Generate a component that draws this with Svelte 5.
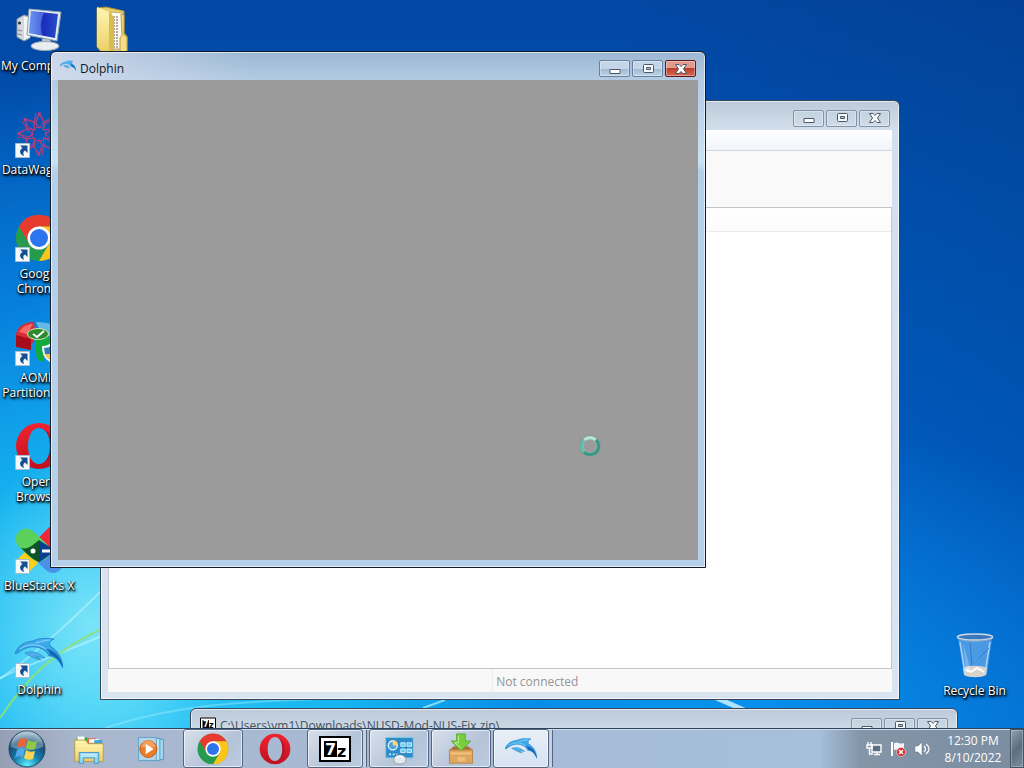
<script>
  const shortcuts = [
    { icon: 'computer', lines: ['My Computer'], link: false },
    { icon: 'data', lines: ['DataWagon...'], link: true },
    { icon: 'chrome', lines: ['Google', 'Chrome'], link: true },
    { icon: 'disks', lines: ['AOMEI', 'Partition As...'], link: true },
    { icon: 'opera', lines: ['Opera', 'Browser'], link: true },
    { icon: 'blocks', lines: ['BlueStacks X'], link: true },
    { icon: 'dolphin', lines: ['Dolphin'], link: true }
  ];

  const tasks = [
    { icon: 'explorer', name: 'Explorer', state: '' },
    { icon: 'media', name: 'Media Player', state: '' },
    { icon: 'chrome', name: 'Chrome', state: 'open' },
    { icon: 'opera', name: 'Opera', state: '' },
    { icon: 'seven', name: '7-Zip', state: 'open stacked' },
    { icon: 'panel', name: 'Control Panel', state: 'open' },
    { icon: 'package', name: 'Installer', state: 'open' },
    { icon: 'dolphin', name: 'Dolphin', state: 'open stacked active' }
  ];

  const petals = [0, 45, 90, 135, 180, 225, 270, 315];
</script>

{#snippet glyph(name)}
  {#if name === 'computer'}
    <svg class="glyph" viewBox="0 0 48 48" aria-hidden="true">
      <path d="M2 13l7-4 6 2v21l-6 3-7-4z" fill="#d5d9dc" stroke="#8b949c" />
      <path d="M9 11v23l6-3V11z" fill="#f3f4f4" />
      <circle cx="4.500" cy="17" r="1.500" fill="#283038" />
      <path d="M3 24l4 1M3 28l4 1" stroke="#7c858c" />
      <path d="M27 33l8-1 1 7h-9z" fill="#b9c4cc" />
      <ellipse cx="30" cy="40" rx="14" ry="4.500" fill="#e9eef0" stroke="#9aa7b2" />
      <path d="M14 3l32 3-4 29-30-6z" fill="#e4ebf1" stroke="#8ca0b4" />
      <path d="M16 5l27 3-3 24-26-5z" fill="url(#screen)" />
      <path d="M16 5l13 2c-4 8-4 15-2 22l-13-2z" fill="#8fb3ff" opacity=".4" />
    </svg>
  {:else if name === 'folder'}
    <svg class="glyph" viewBox="0 0 48 48" aria-hidden="true">
      <path d="M8 2l9-1 18 4v22l3 3v17H13L8 41z" fill="#e6cf69" stroke="#a28d39" />
      <path d="M22 6l12 1v36H22z" fill="#fffbed" stroke="#c4b26b" />
      <path d="M25 10v34M28 10v34" stroke="#b8a7a2" stroke-width="2" stroke-dasharray="2 1" />
      <path d="M8 1l12 5v40L8 41z" fill="url(#folder)" />
      <path d="M20 6l5 5v37l-5-2z" fill="#d7bd4b" />
      <path d="M32 8l3 1v20l3 2v16h-7V32l2-3z" fill="#f5dc86" stroke="#b59c42" />
    </svg>
  {:else if name === 'data'}
    <svg class="glyph" viewBox="0 0 48 48" aria-hidden="true">
      <g fill="none" stroke="#c23a78" stroke-width=".900">
        {#each petals as turn}
          <g transform="rotate({turn} 24 24)">
            <path d="M24 18L19 12l5-8 5 8zM19 12L9 8l5 10 6 2M29 12l8-5" />
            <circle cx="24" cy="4" r="1" fill="#e64668" />
            <circle cx="19" cy="12" r="1" fill="#7b49a8" />
          </g>
        {/each}
        <circle cx="24" cy="24" r="7" />
      </g>
    </svg>
  {:else if name === 'chrome'}
    <svg class="glyph" viewBox="0 0 48 48" aria-hidden="true">
      <circle cx="24" cy="24" r="23" fill="#269b4d" />
      <path d="M4 12.500A23 23 0 0 1 44 12.500H24l-10 17z" fill="#e83b30" />
      <path d="M44 12.500A23 23 0 0 1 24 47l10-17-10-17.500z" fill="#fdc51b" />
      <path d="M4 12.500L14 30l10 6-6 10.200A23 23 0 0 1 4 12.500z" fill="#269b4d" />
      <circle cx="24" cy="24" r="11.500" fill="#fff" />
      <circle cx="24" cy="24" r="9" fill="#2d75ee" />
    </svg>
  {:else if name === 'disks'}
    <svg class="glyph" viewBox="0 0 48 48" aria-hidden="true">
      <path d="M1 17C2 8 10 4 19 4l2 14-4 8-16-4z" fill="#d92d36" />
      <path d="M1 17l15 4v11L1 29z" fill="#a50e1a" />
      <path d="M4 14c4-6 9-8 14-8l-6 10z" fill="#ff817b" opacity=".7" />
      <path d="M21 4c13 0 24 4 25 12L28 20z" fill="#65b9e6" />
      <path d="M46 15v13l-18 4V20z" fill="#288bc4" />
      <path d="M20 22l14-3v8l-6 2v15l-6-3z" fill="#13ab38" />
      <ellipse cx="23" cy="16" rx="10.500" ry="5.500" fill="#2d8a2b" stroke="#c6ecb7" />
      <path d="M18 16l4 3 7-6" fill="none" stroke="#fff" stroke-width="2" />
      <path d="M27 28c5 0 8-2 10-4 3 3 6 4 10 4 0 9-3 14-10 17-7-3-10-8-10-17z" fill="#eef3f5" />
      <path d="M29 30c4 0 6-1 8-3v9h-7z" fill="#2c7ec1" />
      <path d="M30 36h7v7c-4-2-6-4-7-7z" fill="#f6c342" />
    </svg>
  {:else if name === 'opera'}
    <svg class="glyph" viewBox="0 0 48 48" aria-hidden="true">
      <path fill="url(#opera)" fill-rule="evenodd" d="M24 1a23 23 0 1 0 0 46 23 23 0 0 0 0-46zm0 5c7 0 11 8 11 18s-4 18-11 18-11-8-11-18S17 6 24 6z" />
      <path d="M24 6c7 0 11 8 11 18s-4 18-11 18c18-1 20-34 0-36z" fill="#9e0a16" opacity=".6" />
    </svg>
  {:else if name === 'blocks'}
    <svg class="glyph" viewBox="0 0 48 48" aria-hidden="true">
      <path d="M4 44L24 24" stroke="#ffd016" stroke-width="17" stroke-linecap="round" />
      <path d="M24 24l14 13" stroke="#4a91e8" stroke-width="20" stroke-linecap="round" />
      <path d="M24 24L40 8" stroke="#ee2638" stroke-width="18" stroke-linecap="round" />
      <path d="M11 13l13 12" stroke="#5bd05b" stroke-width="21" stroke-linecap="round" />
      <path d="M6 22c7 2 12-3 18-8v22c-6-2-12-8-18-14z" fill="#0d5727" />
      <path d="M24 14c5 3 10 7 16 10-5 4-10 9-16 12z" fill="#093f91" />
      <circle cx="18" cy="25" r="2.500" fill="#fff" />
      <path d="M27 25h8" stroke="#fff" stroke-width="3" />
    </svg>
  {:else if name === 'dolphin'}
    <svg class="glyph" viewBox="0 0 48 48" aria-hidden="true">
      <g transform="translate(0 8)">
        <path d="M0 15C4 7 9 4 18 3c6-3 12-3 21-2-4 2-5 3-4 7 7 4 12 11 13 22-4-8-8-12-14-12-2-5-7-8-13-9-7-1-13 2-17 5-2 2-4 2-4 1z" fill="url(#dolphin)" stroke="#1c7cc9" stroke-width=".800" />
        <path d="M5 11c7-5 17-6 26 0M21 5c7-2 10-3 14-3" fill="none" stroke="#8fd8f8" />
        <path d="M10 15c8-3 14 0 20 5-4-1-6-1-9-1 3 1 4 2 5 3-6-1-11-4-16-7z" fill="#4eaee9" stroke="#2889cb" stroke-width=".700" />
        <path d="M31 11c3 2 4 4 4 6 5 1 9 4 13 13-2-12-9-18-17-19z" fill="#1468b4" />
      </g>
    </svg>
  {:else if name === 'explorer'}
    <svg class="glyph" viewBox="0 0 36 36" aria-hidden="true">
      <path d="M4 5h12v6H4z" fill="#35a93e" /><path d="M5 4h8v4H5z" fill="#fff" />
      <path d="M16 6h10v6H16z" fill="#eb6244" /><path d="M18 7h11v4H18z" fill="#fff" />
      <path d="M24 8h9v6h-9z" fill="#3ba6e0" />
      <path d="M2 8h12l3 4h17v20H2z" fill="url(#folder)" stroke="#b59b42" />
      <path d="M3 15h30M3 19h30" stroke="#fff1ac" />
      <path d="M7 34V22h22v12h-5v-6H12v6z" fill="#8cd6f5" stroke="#428fc7" />
      <path d="M9 24h18M9 26h18" stroke="#e4faff" />
    </svg>
  {:else if name === 'media'}
    <svg class="glyph" viewBox="0 0 36 36" aria-hidden="true">
      <path d="M14 7h18v23H14z" fill="#a8d8f0" stroke="#4895bf" />
      <path d="M10 6h18v25H10z" fill="#b9e2f4" stroke="#4895bf" />
      <path d="M4 5h20v26H4z" fill="#b5d3e6" stroke="#5aa1c8" />
      <circle cx="15" cy="18" r="9.500" fill="#ed7d24" stroke="#bd5615" />
      <path d="M7 16a8 8 0 0 1 16 0z" fill="#ffc28b" opacity=".5" />
      <path d="M12 12l9 6-9 6z" fill="#fff" />
    </svg>
  {:else if name === 'seven'}
    <svg class="glyph" viewBox="0 0 32 32" aria-hidden="true">
      <path d="M1 4h30v24H1z" fill="#fff" stroke="#000" stroke-width="2" />
      <path d="M5 8h13v16H5z" fill="#000" />
      <text x="6" y="22" class="zip" fill="#fff">7</text>
      <text x="18" y="24" class="zip" fill="#000">z</text>
    </svg>
  {:else if name === 'panel'}
    <svg class="glyph" viewBox="0 0 36 36" aria-hidden="true">
      <rect x="3" y="5" width="31" height="23" rx="1" fill="#2e8dc9" stroke="#85cbe9" />
      <circle cx="11" cy="14" r="5" fill="#4ba5dd" stroke="#dff7ff" stroke-width="1.500" />
      <path d="M11 14V8a6 6 0 0 1 6 6z" fill="#ffd273" />
      <path d="M20 11h5v4h-5zM27 11h5v4h-5zM20 18h5v4h-5zM27 18h5v4h-5z" fill="#6fc9ef" stroke="#daf6ff" />
      <path d="M7 24h9" stroke="#daf6ff" stroke-width="2" stroke-dasharray="2 2" />
      <ellipse cx="19" cy="30" rx="7" ry="5" fill="#e6e9eb" stroke="#929da6" />
      <path d="M15 28c3-3 7-2 8 0" stroke="#fff" fill="none" stroke-width="2" />
    </svg>
  {:else if name === 'package'}
    <svg class="glyph" viewBox="0 0 36 36" aria-hidden="true">
      <path d="M5 19l5-4h16l5 4z" fill="#a77238" />
      <path d="M5 19h26v15H5z" fill="#dfa65f" stroke="#b98345" />
      <path d="M6 23h24" stroke="#f4c684" stroke-width="2" />
      <path d="M14 27h9v5h-9z" fill="#edbd7a" />
      <path d="M13 1h10v8h6L18 20 7 9h6z" fill="#78cf3e" stroke="#55a93b" />
      <path d="M15 3v8h-4l7 6" fill="none" stroke="#c6f49b" />
    </svg>
  {:else if name === 'bin'}
    <svg class="glyph" viewBox="0 0 48 48" aria-hidden="true">
      <path d="M7 7h34l-5 36c-6 4-18 4-23 0z" fill="#79b3ee" opacity=".6" />
      <path d="M12 37c5-3 18-3 24 0l-1 7c-5 3-17 3-22 0z" fill="#dbd4cd" />
      <path d="M15 39l5 2 6-4 7 4" fill="none" stroke="#fff" stroke-width="2" />
      <path d="M9 11l5 31M39 11l-5 31" stroke="#c0e0fb" stroke-width="1.500" opacity=".8" />
      <path d="M19 12l2 22M27 28l11-11" stroke="#2d6dba" opacity=".7" />
      <path d="M12 12l8 28h-5z" fill="#fff" opacity=".25" />
      <ellipse cx="24" cy="6" rx="17.500" ry="3" fill="#3b78bb" stroke="#ccdae6" stroke-width="1.500" />
      <path d="M8 8c8 3 24 3 32 0" stroke="#8facc4" fill="none" />
    </svg>
  {/if}
{/snippet}

{#snippet captions()}
  <div class="captions">
    <button class="cap" aria-label="Minimize"><svg viewBox="0 0 16 14"><path d="M3 7.500h10v4H3z" fill="#fff" stroke="#4c5869" /></svg></button>
    <button class="cap" aria-label="Maximize"><svg viewBox="0 0 16 14"><rect x="3.500" y="2.500" width="10" height="8" rx="1" fill="#f6f9fc" stroke="#4c5869" /><path d="M6.500 5.500h4v2h-4z" fill="#b9c9d9" stroke="#4c5869" /></svg></button>
    <button class="cap close" aria-label="Close"><svg viewBox="0 0 16 14"><path d="M2.500 2.500h3.500L8 4.500l2-2h3.500L10.500 7l3 4.500H10L8 9.500l-2 2H2.500L5.500 7z" fill="#fff" stroke="#4c5869" /></svg></button>
  </div>
{/snippet}

<svg class="paints" aria-hidden="true">
  <defs>
    <linearGradient id="screen"><stop offset="0" stop-color="#5480e9" /><stop offset=".500" stop-color="#1c2cbd" /><stop offset="1" stop-color="#2750c8" /></linearGradient>
    <linearGradient id="folder" x2="0" y2="1"><stop stop-color="#fff6b5" /><stop offset="1" stop-color="#edce67" /></linearGradient>
    <linearGradient id="opera" x2="0" y2="1"><stop stop-color="#f2242f" /><stop offset="1" stop-color="#bf101e" /></linearGradient>
    <linearGradient id="dolphin" x2="0" y2="1"><stop stop-color="#45b0ee" /><stop offset="1" stop-color="#208edb" /></linearGradient>
    <radialGradient id="orb" cy=".95" r=".9"><stop stop-color="#5ff0fc" /><stop offset=".400" stop-color="#157eaf" /><stop offset=".750" stop-color="#174b73" /><stop offset="1" stop-color="#8ab2c7" /></radialGradient>
  </defs>
</svg>

<div class="screen">
  <main class="desktop">
    <svg class="rays" viewBox="0 0 1024 728" preserveAspectRatio="none" aria-hidden="true">
      <g fill="none">
        <path d="M0 679C40 650 75 618 130 562" stroke="#c9faff" stroke-width="2" opacity=".5" />
        <path d="M0 678C30 664 70 650 106 634" stroke="#c9faff" stroke-width="2" opacity=".5" />
        <path d="M0 718C28 676 57 649 104 628" stroke="#8be07a" stroke-width="2" opacity=".9" />
        <path d="M105 728C220 690 320 706 480 690" stroke="#a7efff" stroke-width="2" opacity=".4" />
        <path d="M423 708l22-8" stroke="#b7f4ff" stroke-width="2" opacity=".7" />
        <path d="M712 696l32 14" stroke="#d8f8ff" stroke-width="5" opacity=".8" />
      </g>
    </svg>

    <div class="column">
      {#each shortcuts as item}
        <a class="shortcut" href="#{item.icon}">
          <span class="picture">
            {@render glyph(item.icon)}
            {#if item.link}
              <svg class="arrow" viewBox="0 0 15 15" aria-hidden="true"><path d="M.5.5h14v14H.5z" fill="#f4f9fc" stroke="#a9bfd0" /><path d="M5 2.500h7.500V10l-2.500-2.500c-2 1-2 3-1 5.500-5-2-5-6-1.500-8z" fill="#174f92" /></svg>
            {/if}
          </span>
          <span class="label">{#each item.lines as line}<span>{line}</span>{/each}</span>
        </a>
      {/each}
    </div>
    <div class="column second">
      <a class="shortcut" href="#folder" aria-label="Folder"><span class="picture">{@render glyph('folder')}</span></a>
    </div>
    <div class="column last">
      <a class="shortcut" href="#bin"><span class="picture">{@render glyph('bin')}</span><span class="label"><span>Recycle Bin</span></span></a>
    </div>

    <section class="window client" aria-label="Client">
      <header class="titlebar">{@render captions()}</header>
      <div class="menu"></div>
      <div class="tools"></div>
      <div class="list"><div class="heading"></div></div>
      <footer class="status"><span>Not connected</span></footer>
    </section>

    <section class="window archive" aria-label="Archive">
      <header class="titlebar">
        <span class="mini">{@render glyph('seven')}</span>
        <span class="title">C:\Users\vm1\Downloads\NUSD-Mod-NUS-Fix.zip\</span>
        {@render captions()}
      </header>
    </section>

    <section class="window front" aria-label="Dolphin">
      <header class="titlebar">
        <span class="mini">{@render glyph('dolphin')}</span>
        <span class="title">Dolphin</span>
        {@render captions()}
      </header>
      <div class="canvas"></div>
    </section>

    <div class="busy"></div>
  </main>

  <nav class="taskbar" aria-label="Taskbar">
    <button class="start" aria-label="Start">
      <svg viewBox="0 0 38 38" aria-hidden="true">
        <circle cx="19" cy="19" r="18" fill="url(#orb)" stroke="#24465f" />
        <path d="M3 17a16 16 0 0 1 32 0c-9 4-23 4-32 0z" fill="#fff" opacity=".3" />
        <path d="M11 10c3-2 5-2 8-1l-2 8c-3-1-5-1-8 1z" fill="#ed6335" />
        <path d="M20 10c3 2 6 2 9 1l-2 8c-3 1-6 1-9-1z" fill="#92c942" />
        <path d="M9 20c3-2 5-2 8-1l-2 8c-3-1-5-1-8 1z" fill="#52a9e8" />
        <path d="M18 20c3 2 6 2 9 1l-2 8c-3 1-6 1-9-1z" fill="#ffd451" />
      </svg>
    </button>
    <div class="tasks">
      {#each tasks as task}
        <button class="task {task.state}" aria-label={task.name}>{@render glyph(task.icon)}</button>
      {/each}
    </div>
    <div class="tray">
      <svg viewBox="0 0 16 16" aria-hidden="true"><path d="M6 4h9v7H6zM8 13.500h6M11 11v2" fill="#5d7082" stroke="#fff" stroke-width="1.400" /><path d="M2 1v3M5 1v3M1 4h5v3H1zM3.500 7v6H7" fill="none" stroke="#fff" stroke-width="1.400" /></svg>
      <svg viewBox="0 0 16 16" aria-hidden="true"><path d="M2 1v14" stroke="#fff" stroke-width="2" /><path d="M4 2c4-2 5 2 10 0v7c-5 2-6-2-10 0z" fill="#f4f6f8" /><circle cx="11" cy="11" r="4.500" fill="#d62c2c" stroke="#fff" stroke-width=".500" /><path d="M9 9l4 4M13 9l-4 4" stroke="#fff" stroke-width="1.500" /></svg>
      <svg viewBox="0 0 16 16" aria-hidden="true"><path d="M1 5h3l4-4v14l-4-4H1z" fill="#fff" stroke="#60707e" stroke-width=".500" /><path d="M10 5c2 2 2 4 0 6M12 3c4 3 4 7 0 10" fill="none" stroke="#fff" stroke-width="1.200" /></svg>
      <time class="clock"><span>12:30 PM</span><span>8/10/2022</span></time>
    </div>
    <button class="peek" aria-label="Show desktop"></button>
  </nav>
</div>

<style>
  :global(body) {
    margin: 0;
  }
  .screen {
    display: grid;
    grid-template-rows: minmax(0, 1fr) 40px;
    height: 100vh;
    overflow: hidden;
    font: 12px/15px "Open Sans", "Noto Sans", sans-serif;
  }
  button {
    padding: 0;
    font: inherit;
  }
  .paints {
    position: absolute;
    width: 0;
    height: 0;
  }
  .desktop {
    position: relative;
    display: flex;
    overflow: hidden;
    background:
      radial-gradient(ellipse 14% 24% at 9% 86%, rgba(150, 240, 250, 0.75), transparent),
      radial-gradient(ellipse 62% 86% at 12% 96%, #2fc8f6 0%, #16b4f0 35%, rgba(8, 140, 230, 0.75) 65%, transparent 100%),
      radial-gradient(ellipse 60% 50% at 62% 104%, #0b9cf2, transparent),
      linear-gradient(90deg, transparent 60%, rgba(0, 40, 100, 0.2)),
      linear-gradient(#0347a4, #0057b8 35%, #006ee0);
  }
  .rays {
    position: absolute;
    width: 100%;
    height: 100%;
  }
  .column {
    display: grid;
    grid-auto-rows: 104px;
    width: 75px;
    flex: none;
    padding: 6px 0 0 1px;
    box-sizing: border-box;
    position: relative;
  }
  .last {
    margin: auto 12px 30px auto;
    padding: 0;
    grid-auto-rows: auto;
  }
  .shortcut {
    display: flex;
    flex-direction: column;
    align-items: center;
    gap: 4px;
    color: #fff;
    text-decoration: none;
    text-shadow: 0 1px 2px #000, 1px 1px 2px #000, 1px 2px 3px #000;
  }
  .picture {
    position: relative;
    width: 48px;
    height: 48px;
  }
  .glyph {
    display: block;
    width: 100%;
    height: 100%;
  }
  .arrow {
    position: absolute;
    left: 0;
    bottom: 0;
    width: 15px;
    height: 15px;
  }
  .label {
    display: flex;
    flex-direction: column;
    align-items: center;
    white-space: nowrap;
  }
  .zip {
    font: bold 16px "DejaVu Sans", sans-serif;
  }

  .window {
    position: absolute;
    display: flex;
    flex-direction: column;
    box-sizing: border-box;
    padding: 0 7px 7px;
    border: 1px solid #36465a;
    border-radius: 6px 6px 0 0;
    background: linear-gradient(#bccad9, #d3dfec 30px, #d9e4f1);
    box-shadow: inset 0 0 0 1px rgba(255, 255, 255, 0.6);
  }
  .client {
    inset: 100px 124px 28px 100px;
  }
  .archive {
    top: calc(100% - 20px);
    left: 190px;
    right: 66px;
    height: 60px;
  }
  .front {
    inset: 51px 318px 160px 50px;
    border-color: #101c28;
    background:
      linear-gradient(90deg, rgba(215, 222, 238, 0.8), transparent 30%) 0 0 / 100% 28px no-repeat,
      linear-gradient(#9cb7d4, #b4cbe3 28px, #c8e2f5 110px, #b4cfea 120px, #b7d0e9);
  }
  .titlebar {
    display: flex;
    flex: none;
    align-items: center;
    height: 29px;
    gap: 4px;
  }
  .front .titlebar {
    height: 28px;
  }
  .mini {
    width: 16px;
    height: 16px;
    margin-left: 2px;
  }
  .title {
    padding-top: 4px;
    color: #101820;
    white-space: nowrap;
  }
  .archive .title {
    color: #465260;
  }
  .captions {
    display: flex;
    gap: 2px;
    margin: 5px 2px 0 auto;
  }
  .cap {
    display: grid;
    place-items: center;
    width: 31px;
    height: 17px;
    border: 1px solid #8291a4;
    border-radius: 2px;
    background: transparent;
    box-shadow: inset 0 0 0 1px rgba(255, 255, 255, 0.35);
  }
  .cap svg {
    width: 16px;
    height: 14px;
  }
  .front .cap {
    border-color: #66809e;
    background: linear-gradient(#c4d5e7 50%, #9fb7d0 50%, #bed3e7);
  }
  .front .close {
    border-color: #5b1a22;
    background: linear-gradient(#e09a8e 45%, #bf3e2d 50%, #d2694f);
  }
  .menu {
    height: 20px;
    background: linear-gradient(#fff, #f0f3f9);
    border-bottom: 1px solid #d3d6da;
  }
  .tools {
    height: 56px;
    background: #f9f9f9;
  }
  .list {
    flex: 1;
    border: 1px solid #c2c5ca;
    background: #fff;
  }
  .heading {
    height: 23px;
    border-bottom: 1px solid #ededed;
    background: linear-gradient(#fff, #fbfbfb);
  }
  .status {
    display: flex;
    height: 23px;
    background: #f9f8f9;
    color: #949494;
    line-height: 25px;
  }
  .status span {
    width: 51%;
    box-sizing: border-box;
    margin-left: auto;
    padding-left: 3px;
    border-left: 1px solid #ededed;
  }
  .canvas {
    flex: 1;
    background: #9b9b9b;
  }
  .busy {
    position: absolute;
    left: 580px;
    top: 436px;
    width: 14px;
    height: 14px;
    border: 3px solid #2f9c84;
    border-top-color: #b4e8dc;
    border-left-color: #61bfae;
    border-radius: 50%;
    box-shadow: inset 0 0 1px #dff, 0 0 1px #1f7d6a;
  }

  .taskbar {
    position: relative;
    display: flex;
    box-sizing: border-box;
    border-top: 1px solid #2c435c;
    box-shadow: inset 0 1px #d0deec;
    background: linear-gradient(90deg, #949fb4, #a9b7ce 8%, #a6bbd7 50%, #a6bfdb 80%, #8495a8 84%, #7b8da1);
  }
  .start {
    width: 58px;
    flex: none;
    padding-left: 8px;
    border: 0;
    background: none;
  }
  .start svg {
    display: block;
    width: 38px;
    height: 38px;
  }
  .tasks {
    display: flex;
  }
  .task {
    position: relative;
    display: grid;
    place-items: center;
    box-sizing: border-box;
    width: 60px;
    height: 39px;
    margin: 0 1px;
    border: 1px solid transparent;
    border-radius: 3px;
    background: none;
  }
  .task .glyph {
    width: 32px;
    height: 32px;
  }
  .task.open {
    border-color: #536580;
    background: linear-gradient(135deg, #d8e0eb, #b5c3d8 60%, #bccbe0);
    box-shadow: inset 0 0 0 1px rgba(255, 255, 255, 0.6);
  }
  .task.stacked {
    width: 56px;
    margin-right: 5px;
  }
  .task.stacked::after {
    content: "";
    position: absolute;
    top: 0;
    right: -5px;
    width: 3px;
    height: 37px;
    border-right: 1px solid #536580;
    background: #c5d1e1;
  }
  .task.active {
    background: linear-gradient(#e9eff7, #d5e2f2);
  }
  .tray {
    display: flex;
    align-items: center;
    gap: 8px;
    margin-left: auto;
  }
  .tray svg {
    width: 16px;
    height: 16px;
  }
  .clock {
    display: flex;
    flex-direction: column;
    align-items: center;
    width: 62px;
    margin-left: 4px;
    margin-right: 6px;
    color: #fff;
    line-height: 17px;
  }
  .peek {
    width: 14px;
    flex: none;
    border: 1px solid #465667;
    background: linear-gradient(135deg, #91a0b0, #5d6e80 50%, #7d8d9e);
    box-shadow: inset 0 0 0 1px rgba(255, 255, 255, 0.25);
  }
</style>
